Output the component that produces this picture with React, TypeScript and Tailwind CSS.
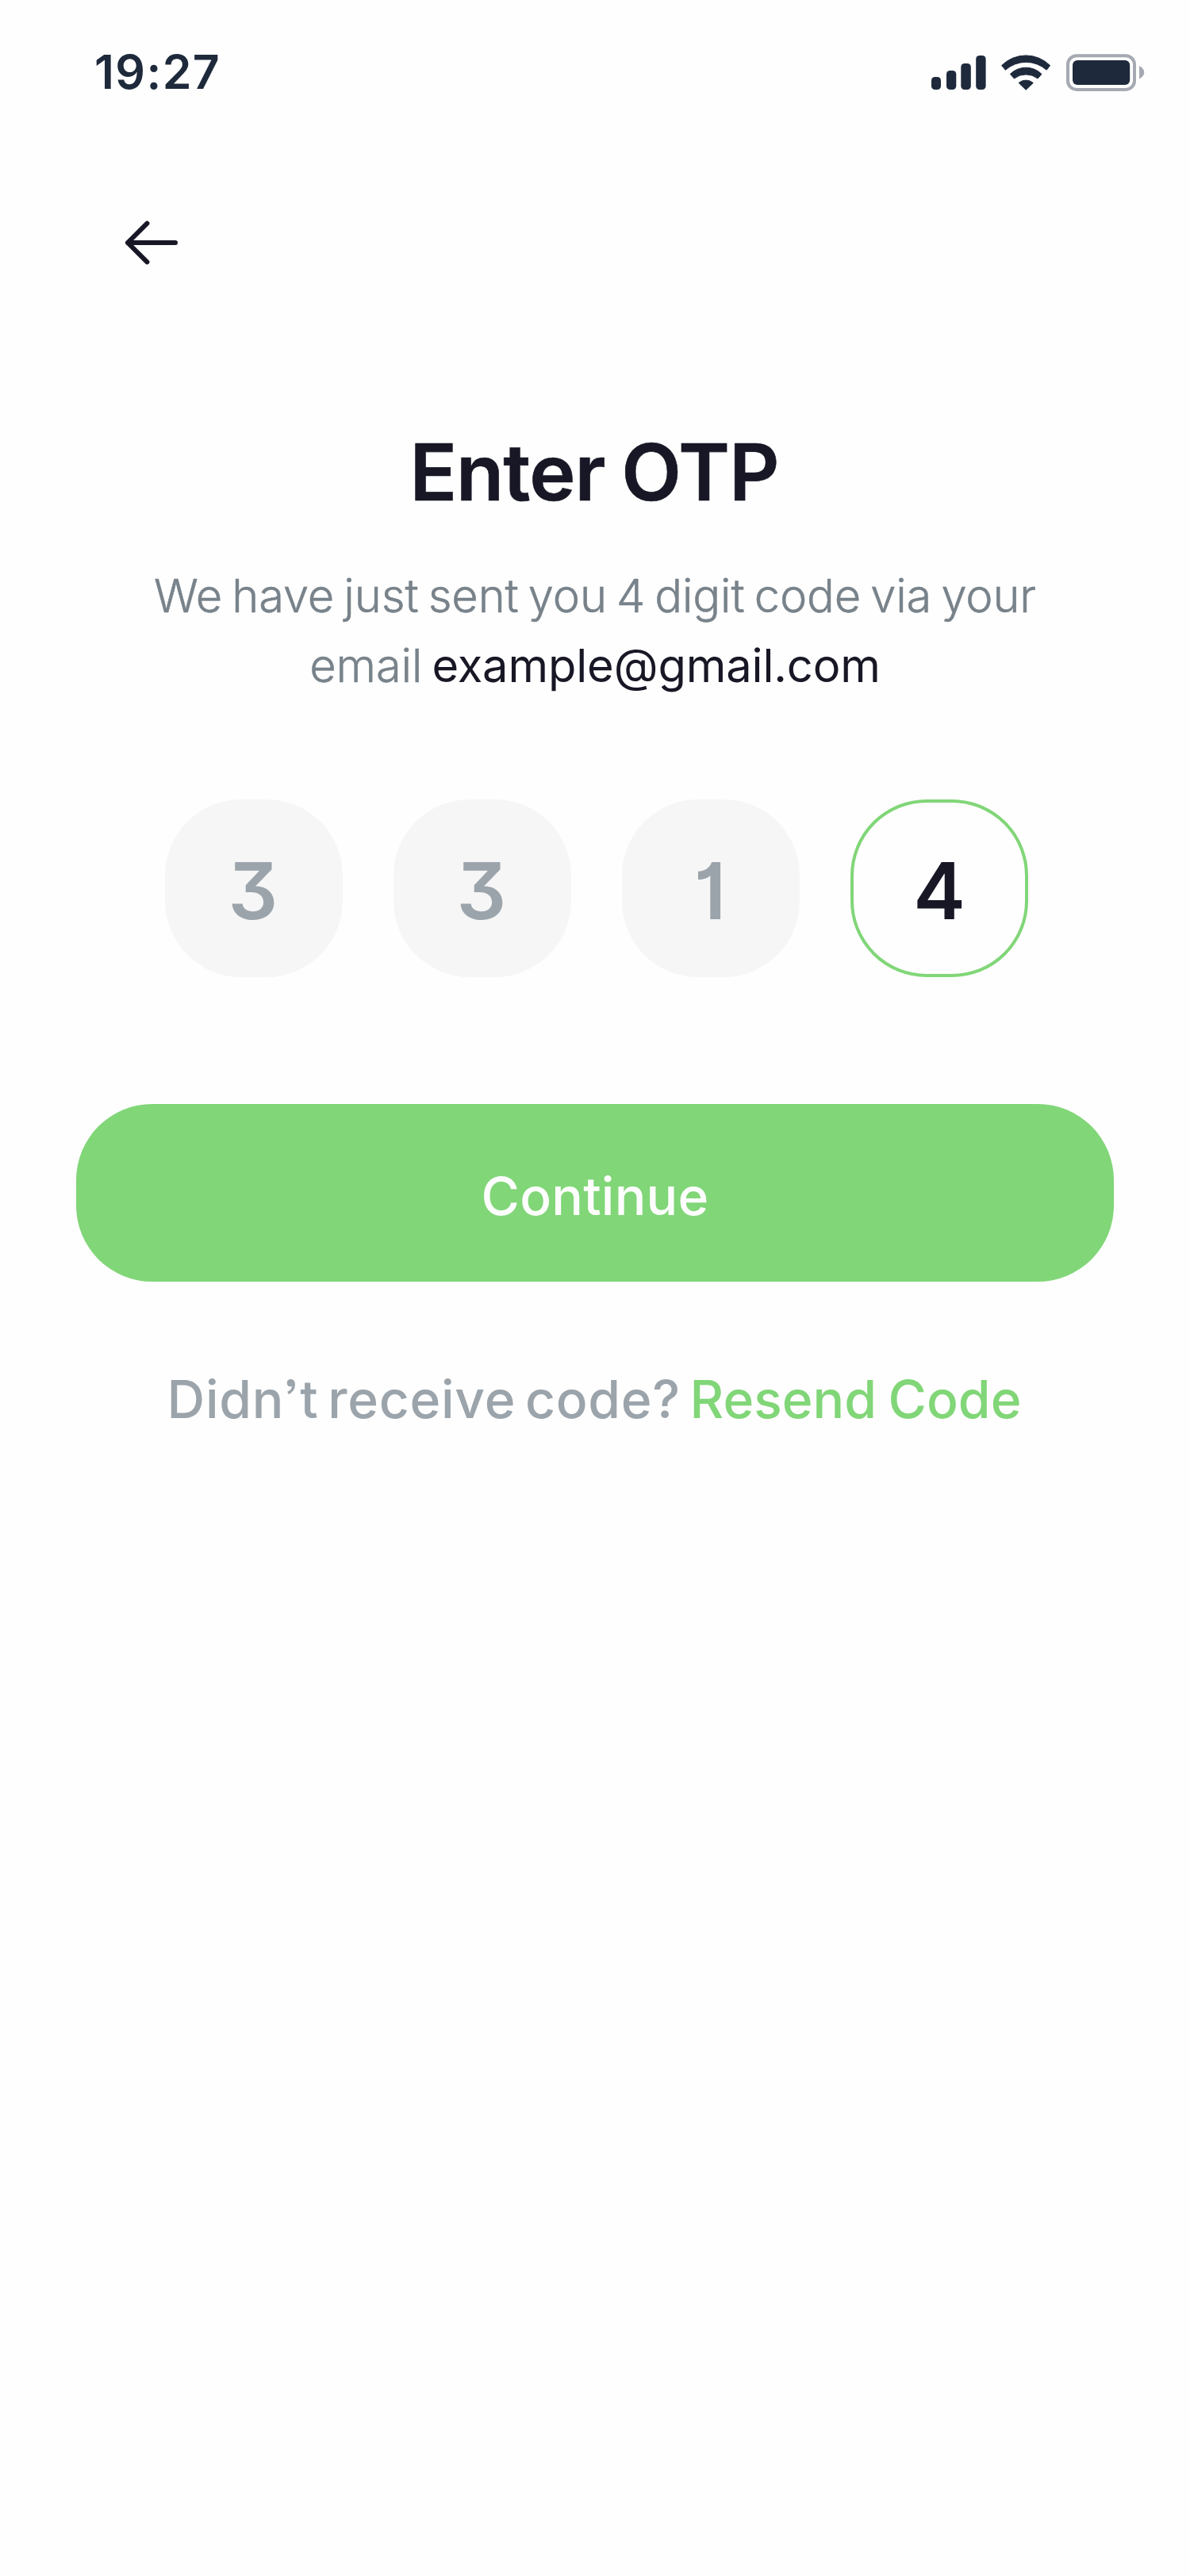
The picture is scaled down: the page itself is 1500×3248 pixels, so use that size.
import { useState } from "react";

function SignalIcon() {
  return (
    <svg className="h-[46px] w-[69px]" viewBox="1174 68 69 46" fill="#1e293b">
      <rect x="1174" y="97" width="12" height="16" rx="4.5" />
      <rect x="1193" y="89" width="12.3" height="24" rx="4.5" />
      <rect x="1211.3" y="80" width="12.5" height="33" rx="4.5" />
      <rect x="1230.2" y="70" width="12.4" height="43" rx="4.5" />
    </svg>
  );
}

function WifiIcon() {
  return (
    <svg
      className="h-[46px] w-[62px]"
      viewBox="1262 68 62 46"
      fill="#1e293b"
      stroke="#1e293b"
      strokeWidth="1"
      strokeLinejoin="round"
    >
      <path d="M1262.6 82.6A43 43 0 0 1 1323.6 82.6L1319.2 88.2A39 39 0 0 0 1267.4 88.2Z" />
      <path d="M1273.4 93.4A28 28 0 0 1 1313 93.4L1308 99A24 24 0 0 0 1278.4 99Z" />
      <path d="M1284.1 104.5A14 14 0 0 1 1302.3 104.5L1293.2 113.3Z" />
    </svg>
  );
}

function BatteryIcon() {
  return (
    <svg className="h-[48px] w-[100px]" viewBox="1343 67 100 48">
      <rect x="1346" y="70.3" width="84" height="42.6" rx="11" fill="none" stroke="#a5a9b2" strokeWidth="4" />
      <rect x="1352" y="76" width="72.2" height="31" rx="6" fill="#1e293b" />
      <path d="M1436 83.3C1439.6 84.8 1442.2 87.6 1442.2 91.2S1439.6 97.8 1436 99.3Z" fill="#a5a9b2" />
    </svg>
  );
}

function StatusBar() {
  return (
    <header className="flex h-[182px] items-center justify-between pl-[119px] pr-[57px] text-[#1e293b]">
      <span className="text-[59px] font-semibold leading-[60px] tracking-[1.4px]">19:27</span>
      <div className="flex items-center gap-[19px]">
        <SignalIcon />
        <WifiIcon />
        <BatteryIcon />
      </div>
    </header>
  );
}

function BackArrow() {
  return (
    <svg
      className="size-24"
      viewBox="144 258 96 96"
      fill="none"
      stroke="#171725"
      strokeWidth="6"
      strokeLinecap="round"
      strokeLinejoin="round"
    >
      <path d="M221 306H161M185.4 281.6L161 306L185.4 330.4" />
    </svg>
  );
}

export default function App() {
  const [digits] = useState(["3", "3", "1", "4"]);
  const active = 3;

  return (
    <div className="flex min-h-[3248px] w-[1500px] flex-col bg-[#fefefe] font-['Inter',sans-serif]">
      <StatusBar />
      <div className="flex pl-36 pt-[76px]">
        <button aria-label="Back">
          <BackArrow />
        </button>
      </div>

      <main className="flex flex-col px-24 text-center">
        <h1 className="mt-[180px] pr-0.5 text-[98.5px] font-semibold leading-[124px] tracking-[-1px] text-[#171725] [-webkit-text-stroke:0.6px] [word-spacing:-3px]">
          Enter OTP
        </h1>
        <p className="mt-[49px] text-[57.8px] font-light leading-[88px] tracking-[-0.12px] text-[#78828a] [word-spacing:-4px]">
          <span className="[-webkit-text-stroke:0.5px]">
            We have just sent you 4 digit code via your
            <br />
            email{" "}
          </span>
          <span className="font-normal text-[#171725]">example@gmail.com</span>
        </p>

        <div className="mt-[125px] flex justify-center gap-16 pl-1">
          {digits.map((d, i) => (
            <div
              key={i}
              className={
                i === active
                  ? "flex size-56 items-center justify-center rounded-[96px] border-4 border-[#81d678] pt-2 text-[98.5px] font-semibold leading-none text-[#171725]"
                  : "flex size-56 items-center justify-center rounded-[96px] bg-[#f6f6f6] pt-2 pr-0.5 text-[98.5px] font-semibold leading-none text-[#9ca4ab] [font-feature-settings:'cv09','cv01']"
              }
            >
              {d}
            </div>
          ))}
        </div>

        <button className="mt-40 flex h-56 items-center justify-center rounded-[96px] bg-[#81d678] pt-2 text-[66px] font-medium tracking-[0.2px] text-[#fefefe]">
          Continue
        </button>

        <p className="mt-[104px] pr-0.5 text-[66px] font-medium leading-[88px] text-[#81d678] [font-feature-settings:'ss03']">
          <span className="tracking-[0.7px] text-[#9ca4ab] [word-spacing:-6.5px]">Didn’t receive code? </span>
          <span className="[word-spacing:-3px]">Resend Code</span>
        </p>
      </main>
    </div>
  );
}
